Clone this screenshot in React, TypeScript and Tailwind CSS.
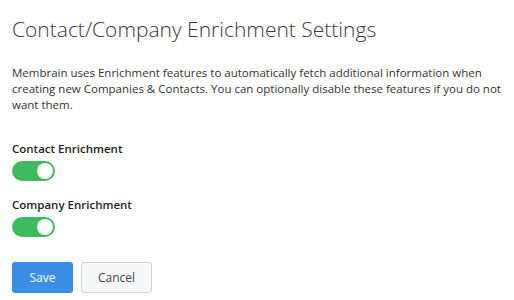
import React, { useState } from 'react';

const Toggle: React.FC<{ on: boolean; onChange: () => void }> = ({ on, onChange }) => (
  <button
    onClick={onChange}
    className={`relative flex h-[20px] w-[43px] items-center rounded-full px-[2px] ${
      on ? 'justify-end bg-[#3dbb5e]' : 'justify-start bg-[#cfd3d8]'
    }`}
  >
    <span className="h-[16px] w-[16px] rounded-full bg-white" />
  </button>
);

export default function App() {
  const [contact, setContact] = useState(true);
  const [company, setCompany] = useState(true);

  return (
    <div className="min-h-[300px] w-[514px] bg-white px-[12px] pt-[14px] font-['Open_Sans',sans-serif] text-[#333]">
      <h1 className="text-[21px] font-light leading-[30px] text-[#3a3a3a]">Contact/Company Enrichment Settings</h1>

      <p className="mt-[21px] w-[490px] text-[11.5px] leading-[16px] text-[#333]">
        Membrain uses Enrichment features to automatically fetch additional information when creating new Companies &amp;
        Contacts. You can optionally disable these features if you do not want them.
      </p>

      <div className="mt-[28px] flex flex-col gap-[4px]">
        <span className="text-[11.5px] font-semibold leading-[16px] text-[#222]">Contact Enrichment</span>
        <Toggle on={contact} onChange={() => setContact(!contact)} />
      </div>

      <div className="mt-[16px] flex flex-col gap-[4px]">
        <span className="text-[11.5px] font-semibold leading-[16px] text-[#222]">Company Enrichment</span>
        <Toggle on={company} onChange={() => setCompany(!company)} />
      </div>

      <div className="mt-[25px] flex gap-[8px]">
        <button className="h-[31px] w-[61px] rounded-[3px] bg-[#3a8ee6] text-[12px] text-white">Save</button>
        <button className="h-[31px] w-[71px] rounded-[3px] border border-[#cfd2d6] bg-[#f7f8fa] text-[12px] text-[#444]">
          Cancel
        </button>
      </div>
    </div>
  );
}
